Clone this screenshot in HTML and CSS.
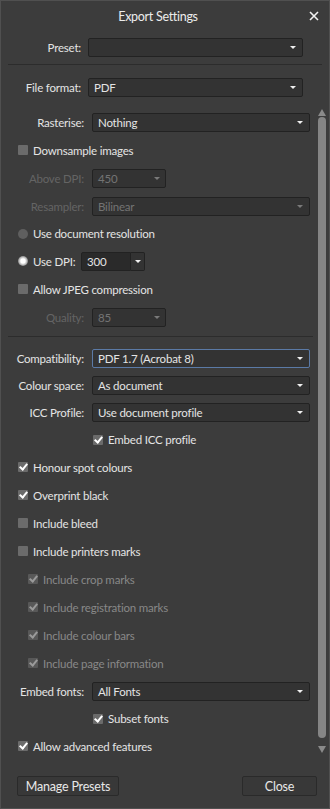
FILE: index.html
```html
<!DOCTYPE html>
<html lang="en">
  <head>
    <meta charset="UTF-8" />
    <meta name="viewport" content="width=device-width, initial-scale=1.0" />
    <title>Export Settings</title>
    <link rel="stylesheet" href="styles.css">
  </head>
  <body>
    <div class="dialog">
      <div class="titlebar">
        <span class="title">Export Settings</span>
        <span class="close">
          <svg width="10" height="10" viewBox="0 0 10 10">
            <path d="M1 1 L9 9 M9 1 L1 9" stroke="#f2f2f2" stroke-width="1.6" fill="none" />
          </svg>
        </span>
      </div>

      <div class="top">
        <div class="row top-row">
          <label class="lbl">Preset:</label>
          <div class="select"><span class="val"></span><i class="caret"></i></div>
        </div>
        <div class="sep top-sep"></div>
        <div class="row top-row">
          <label class="lbl">File format:</label>
          <div class="select"><span class="val">PDF</span><i class="caret"></i></div>
        </div>
      </div>

      <div class="scroll">
        <div class="content">
          <div class="row field">
            <label class="lbl">Rasterise:</label>
            <div class="select"><span class="val">Nothing</span><i class="caret"></i></div>
          </div>
          <div class="row check">
            <span class="box"></span><span class="txt">Downsample images</span>
          </div>
          <div class="row field disabled">
            <label class="lbl">Above DPI:</label>
            <div class="select short"><span class="val">450</span><i class="caret"></i></div>
          </div>
          <div class="row field disabled">
            <label class="lbl">Resampler:</label>
            <div class="select"><span class="val">Bilinear</span><i class="caret"></i></div>
          </div>
          <div class="row check h27">
            <span class="radio"></span><span class="txt">Use document resolution</span>
          </div>
          <div class="row check">
            <span class="radio on"></span><span class="txt dpi-txt">Use DPI:</span>
            <div class="spinner">
              <span class="num">300</span>
              <span class="spin-btn"><i class="caret"></i></span>
            </div>
          </div>
          <div class="row check">
            <span class="box"></span><span class="txt">Allow JPEG compression</span>
          </div>
          <div class="row field disabled">
            <label class="lbl">Quality:</label>
            <div class="select short"><span class="val">85</span><i class="caret"></i></div>
          </div>

          <div class="sep mid-sep"></div>

          <div class="row field h27">
            <label class="lbl">Compatibility:</label>
            <div class="select focus"><span class="val">PDF 1.7 (Acrobat 8)</span><i class="caret"></i></div>
          </div>
          <div class="row field h27">
            <label class="lbl">Colour space:</label>
            <div class="select"><span class="val">As document</span><i class="caret"></i></div>
          </div>
          <div class="row field h27">
            <label class="lbl">ICC Profile:</label>
            <div class="select"><span class="val">Use document profile</span><i class="caret"></i></div>
          </div>
          <div class="row check sub h27">
            <span class="box checked"></span><span class="txt">Embed ICC profile</span>
          </div>
          <div class="row check">
            <span class="box checked"></span><span class="txt">Honour spot colours</span>
          </div>
          <div class="row check">
            <span class="box checked"></span><span class="txt">Overprint black</span>
          </div>
          <div class="row check">
            <span class="box"></span><span class="txt">Include bleed</span>
          </div>
          <div class="row check">
            <span class="box"></span><span class="txt">Include printers marks</span>
          </div>
          <div class="row check indent disabled">
            <span class="box checked"></span><span class="txt">Include crop marks</span>
          </div>
          <div class="row check indent disabled">
            <span class="box checked"></span><span class="txt">Include registration marks</span>
          </div>
          <div class="row check indent disabled">
            <span class="box checked"></span><span class="txt">Include colour bars</span>
          </div>
          <div class="row check indent disabled">
            <span class="box checked"></span><span class="txt">Include page information</span>
          </div>
          <div class="row field">
            <label class="lbl">Embed fonts:</label>
            <div class="select"><span class="val">All Fonts</span><i class="caret"></i></div>
          </div>
          <div class="row check sub h27">
            <span class="box checked"></span><span class="txt">Subset fonts</span>
          </div>
          <div class="row check">
            <span class="box checked"></span><span class="txt">Allow advanced features</span>
          </div>
        </div>

        <div class="scrollbar">
          <span class="arrow up"></span>
          <span class="thumb"></span>
          <span class="arrow down"></span>
        </div>
      </div>

      <div class="footer">
        <button class="btn manage">Manage Presets</button>
        <button class="btn close-btn">Close</button>
      </div>
    </div>
  </body>
</html>
```

FILE: styles.css
```css
body {
  margin: 0;
  background-color: #3c3c3c;
  font-family: Lato, "Open Sans", sans-serif;
  font-size: 11.5px;
  letter-spacing: -0.2px;
  color: #e4e4e4;
}
.dialog {
  width: 330px;
  height: 809px;
  box-sizing: border-box;
  border: 1px solid #505050;
  display: flex;
  flex-direction: column;
  background-color: #3c3c3c;
}
.titlebar {
  height: 30px;
  display: flex;
  align-items: center;
  flex-shrink: 0;
}
.title {
  flex: 1;
  padding-left: 10px;
  text-align: center;
  font-size: 12.5px;
  letter-spacing: -0.3px;
  color: #ececec;
}
.close {
  width: 18px;
  margin-right: 6px;
  display: flex;
  justify-content: center;
  align-items: center;
}
.close svg {
  display: block;
}

/* rows */
.row {
  display: flex;
  align-items: center;
}
.lbl {
  text-align: right;
  flex-shrink: 0;
  white-space: nowrap;
}
.select {
  flex: 1;
  height: 19px;
  box-sizing: border-box;
  background-color: #333333;
  border: 1px solid #222222;
  border-radius: 2px;
  display: flex;
  align-items: center;
  padding: 0 6px 0 5px;
}
.select .val {
  flex: 1;
  white-space: nowrap;
}
.select.short {
  flex: none;
  width: 74px;
  padding-right: 5px;
}
.select.focus {
  border-color: #5b7aa6;
}
.caret {
  width: 0;
  height: 0;
  border-left: 3px solid transparent;
  border-right: 3px solid transparent;
  border-top: 3px solid #f0f0f0;
}

/* top block */
.top {
  padding: 7px 0 7px 0;
  flex-shrink: 0;
}
.top-row {
  padding-right: 26px;
}
.top-row .lbl {
  width: 80px;
  margin-right: 7px;
}
.sep {
  height: 1px;
  background-color: #2c2c2c;
}
.top-sep {
  margin: 7px 7px 13px 7px;
}

/* scroll area */
.scroll {
  flex: 1;
  display: flex;
  min-height: 0;
}
.content {
  flex: 1;
  padding-top: 4px;
}
.field {
  height: 28px;
  padding-right: 8px;
}
.field .lbl {
  width: 83px;
  margin-right: 8px;
}
.check {
  height: 28px;
  padding-left: 17px;
}
.h27 {
  height: 27px;
}
.check.indent {
  padding-left: 27px;
}
.check.sub {
  padding-left: 92px;
}
.mid-sep {
  margin: 5px 5px 8px 7px;
}
.box {
  width: 10px;
  height: 10px;
  border-radius: 1px;
  background-color: #6b6b6b;
  margin-right: 5px;
  flex-shrink: 0;
  position: relative;
}
.box.checked::after {
  content: "";
  position: absolute;
  left: 3px;
  top: 0px;
  width: 3px;
  height: 6px;
  border-right: 2px solid #ffffff;
  border-bottom: 2px solid #ffffff;
  transform: rotate(40deg);
}
.radio {
  width: 10px;
  height: 10px;
  border-radius: 50%;
  background-color: #5f5f5f;
  margin-right: 5px;
  flex-shrink: 0;
}
.radio.on {
  background: radial-gradient(circle, #ffffff 0, #ffffff 30%, #c8c8c8 50%, #7a7a7a 75%);
}
.dpi-txt {
  width: 48px;
}
.spinner {
  display: flex;
  height: 19px;
  width: 64px;
}
.spinner .num {
  flex: 1;
  background-color: #2a2a2a;
  border: 1px solid #222222;
  border-radius: 2px 0 0 2px;
  padding-left: 5px;
  display: flex;
  align-items: center;
}
.spin-btn {
  width: 13px;
  background-color: #333333;
  border: 1px solid #222222;
  border-left: none;
  border-radius: 0 2px 2px 0;
  display: flex;
  align-items: center;
  justify-content: center;
}
.disabled {
  color: #646464;
}
.disabled .val {
  color: #737373;
}
.check.disabled {
  color: #888888;
}
.disabled .caret {
  border-top-color: #7a7a7a;
}
.disabled .box {
  background-color: #585858;
}
.disabled .box.checked::after {
  border-color: #9a9a9a;
}

/* scrollbar */
.scrollbar {
  width: 8px;
  margin-right: 3px;
  padding-top: 5px;
  padding-bottom: 7px;
  display: flex;
  flex-direction: column;
  align-items: center;
}
.arrow {
  width: 0;
  height: 0;
  border-left: 4px solid transparent;
  border-right: 4px solid transparent;
}
.arrow.up {
  border-bottom: 7px solid #8a8a8a;
}
.arrow.down {
  border-top: 7px solid #8a8a8a;
}
.thumb {
  flex: 1;
  width: 8px;
  margin: 1px 0 8px 0;
  background-color: #858585;
  border-radius: 4px;
}

/* footer */
.footer {
  height: 48px;
  flex-shrink: 0;
  display: flex;
  justify-content: space-between;
  align-items: flex-start;
  padding: 16px 12px 0 16px;
  box-sizing: border-box;
}
.btn {
  height: 20px;
  font-family: Lato, "Open Sans", sans-serif;
  font-size: 12.5px;
  letter-spacing: -0.2px;
  color: #e8e8e8;
  background-color: #383838;
  border: 1px solid #2a2a2a;
  border-radius: 2px;
  padding: 0;
}
.manage {
  width: 102px;
}
.close-btn {
  width: 75px;
}
```
